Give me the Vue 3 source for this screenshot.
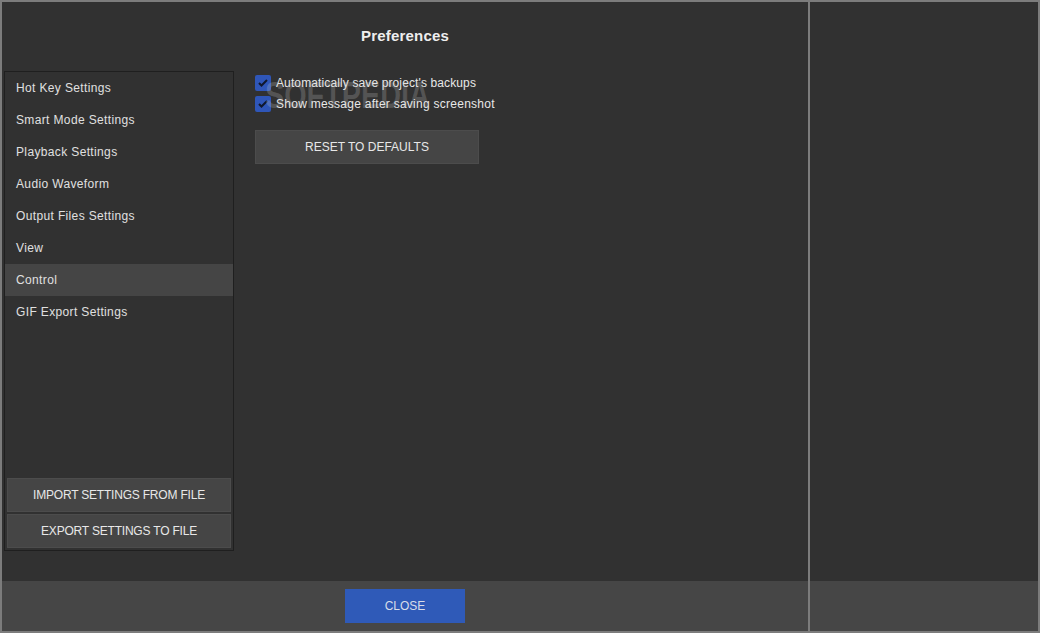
<script setup>
const items = ['Hot Key Settings','Smart Mode Settings','Playback Settings','Audio Waveform','Output Files Settings','View','Control','GIF Export Settings']
const checks = [
  { text: "Automatically save project's backups", cls: 'narrow' },
  { text: 'Show message after saving screenshot', cls: 'wide' }
]
</script>

<template>
  <div class="win">
    <div class="top">
      <div class="left">
        <div class="title">Preferences</div>
        <div class="body">
          <aside class="side">
            <div class="list">
              <div v-for="i in items" :key="i" class="item" :class="{ on: i === 'Control' }">{{ i }}</div>
            </div>
            <div class="btns">
              <button class="btn tight">IMPORT SETTINGS FROM FILE</button>
              <button class="btn tight">EXPORT SETTINGS TO FILE</button>
            </div>
          </aside>
          <main class="main">
            <label v-for="c in checks" :key="c.text" class="check">
              <span class="box">
                <svg width="12" height="10" viewBox="0 0 12 10"><path d="M2 5 L4.5 7.5 L10 2" fill="none" stroke="#10182c" stroke-width="2"/></svg>
              </span>
              <span class="ctext" :class="c.cls">{{ c.text }}</span>
            </label>
            <button class="btn reset">RESET TO DEFAULTS</button>
            <span class="mark">SOFTPEDIA</span>
          </main>
        </div>
      </div>
      <div class="right"></div>
    </div>
    <div class="foot">
      <div class="footl"><button class="close">CLOSE</button></div>
      <div class="footr"></div>
    </div>
  </div>
</template>

<style>
html, body { margin: 0; background: #313131; }
</style>
<style scoped>
.win { width: 1040px; height: 633px; box-sizing: border-box; border: 2px solid #7c7c7c; background: #313131; display: flex; flex-direction: column; font-family: "Liberation Sans", Arial, sans-serif; color: #eee; overflow: hidden; }
.top { flex: 1; display: flex; min-height: 0; }
.left { width: 806px; display: flex; flex-direction: column; }
.right { flex: 1; border-left: 2px solid #7c7c7c; }
.title { height: 69px; box-sizing: border-box; padding-top: 25px; text-align: center; font-size: 15px; line-height: 18px; font-weight: 700; letter-spacing: 0.2px; color: #eeeeee; }
.body { display: flex; }
.side { margin-left: 2px; width: 230px; height: 480px; box-sizing: border-box; border: 1px solid #1f1f1f; display: flex; flex-direction: column; justify-content: space-between; }
.item { height: 32px; line-height: 32px; padding-left: 11px; font-size: 12px; letter-spacing: 0.36px; color: #e0e0e0; }
.item.on { background: #454545; }
.btns { display: flex; flex-direction: column; gap: 2px; padding: 0 1px 2px 1px; }
.btn { width: 224px; height: 34px; margin: 0 auto; background: #454545; border: 1px solid #4c4c4c; color: #e8e8e8; font: 12px "Liberation Sans", Arial, sans-serif; padding: 0; }
.tight { letter-spacing: -0.2px; }
.main { position: relative; margin-left: 21px; padding-top: 1px; display: flex; flex-direction: column; align-items: flex-start; }
.mark { position: absolute; left: 10px; top: 7px; font-size: 36px; line-height: 36px; font-weight: 700; color: rgba(210,210,210,0.22); transform: scaleX(0.8); transform-origin: left center; pointer-events: none; }
.check { display: flex; align-items: center; height: 21px; gap: 5px; }
.box { width: 16px; height: 16px; border-radius: 2px; background: #2f56b8; display: flex; align-items: center; justify-content: center; }
.ctext { font-size: 12px; color: #e8e8e8; }
.narrow { letter-spacing: 0.12px; }
.wide { letter-spacing: 0.26px; }
.reset { margin: 16px 0 0; }
.foot { height: 50px; display: flex; background: #464646; }
.footl { width: 806px; display: flex; justify-content: center; align-items: center; }
.footr { flex: 1; border-left: 2px solid #7c7c7c; }
.close { width: 120px; height: 34px; background: #2f5ab8; border: 0; color: #d8dde8; font: 12px "Liberation Sans", Arial, sans-serif; padding: 0; }
</style>
